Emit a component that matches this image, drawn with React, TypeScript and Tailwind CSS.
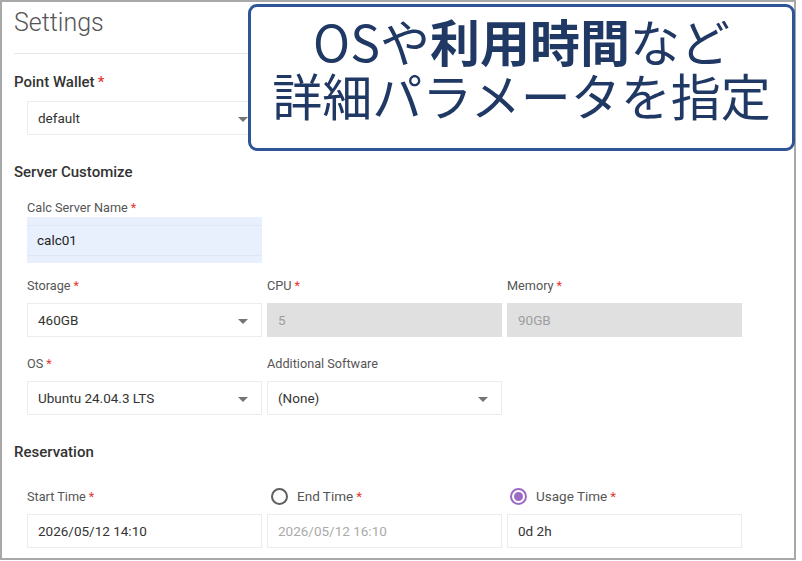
import React from "react";

const Star = () => <span className="text-[#e53935] ml-[3px]">*</span>;

const Caret = () => (
  <svg width="10" height="6" viewBox="0 0 10 6" className="absolute right-[13px] top-[15px]">
    <path d="M0 0 L10 0 L5 5 Z" fill="#757575" />
  </svg>
);

function Label({ text, req = true }: { text: string; req?: boolean }) {
  return (
    <div className="h-[16px] text-[12.7px] leading-[16px] text-[#555]">
      {text}
      {req && <Star />}
    </div>
  );
}

function Select({ value }: { value: string }) {
  return (
    <div className="relative h-[34px] w-[235px] border border-[#ececec] bg-white pl-[10px] text-[13.5px] leading-[32px] text-[#333]">
      {value}
      <Caret />
    </div>
  );
}

function Disabled({ value }: { value: string }) {
  return (
    <div className="h-[34px] w-[235px] bg-[#e0e0e0] pl-[11px] text-[13.5px] leading-[34px] text-[#9e9e9e]">
      {value}
    </div>
  );
}

function Input({ value, muted = false }: { value: string; muted?: boolean }) {
  return (
    <div
      className={
        "h-[34px] w-[235px] border border-[#ececec] bg-white pl-[10px] text-[13.5px] leading-[32px] " +
        (muted ? "text-[#aaa]" : "text-[#333]")
      }
    >
      {value}
    </div>
  );
}

function Radio({ checked }: { checked: boolean }) {
  return checked ? (
    <div className="flex h-[17px] w-[17px] items-center justify-center rounded-full border-2 border-[#9c6cc4]">
      <div className="h-[9px] w-[9px] rounded-full bg-[#9c6cc4]" />
    </div>
  ) : (
    <div className="h-[17px] w-[17px] rounded-full border-2 border-[#5f5f5f]" />
  );
}

export default function App() {
  return (
    <div
      className="relative h-[561px] w-[802px] bg-white"
      style={{ fontFamily: "Roboto, 'Noto Sans', sans-serif" }}
    >
      <div className="h-[560px] w-[796px] overflow-hidden border-2 border-[#a8a8a8] pl-[12px]">
        <div className="mt-[5px] h-[32px] text-[25px] font-light leading-[32px] text-[#555]">Settings</div>
        <div className="mt-[14px] h-px w-[770px] bg-[#e8e8e8]" />

        <div className="mt-[18px] h-[20px] text-[15px] font-medium leading-[20px] text-[#333]">
          Point Wallet
          <Star />
        </div>
        <div className="ml-[13px] mt-[9px]">
          <Select value="default" />
        </div>

        <div className="mt-[27px] h-[20px] text-[15px] font-medium leading-[20px] text-[#333]">Server Customize</div>

        <div className="ml-[13px] flex flex-col">
          <div className="mt-[18px]">
            <Label text="Calc Server Name" />
          </div>
          <div className="mt-[1px] flex h-[46px] w-[235px] flex-col justify-center bg-[#e8f0fe]">
            <div className="h-[31px] border-y border-[#dfe7f5] pl-[10px] text-[13.5px] leading-[29px] text-[#222]">calc01</div>
          </div>

          <div className="mt-[15px] grid grid-cols-[235px_235px_235px] gap-x-[5px]">
            <Label text="Storage" />
            <Label text="CPU" />
            <Label text="Memory" />
            <div className="mt-[9px]">
              <Select value="460GB" />
            </div>
            <div className="mt-[9px]">
              <Disabled value="5" />
            </div>
            <div className="mt-[9px]">
              <Disabled value="90GB" />
            </div>
          </div>

          <div className="mt-[19px] grid grid-cols-[235px_235px_235px] gap-x-[5px]">
            <Label text="OS" />
            <Label text="Additional Software" req={false} />
            <div />
            <div className="mt-[9px]">
              <Select value="Ubuntu 24.04.3 LTS" />
            </div>
            <div className="mt-[9px]">
              <Select value="(None)" />
            </div>
            <div />
          </div>
        </div>

        <div className="mt-[27px] h-[20px] text-[15px] font-medium leading-[20px] text-[#333]">Reservation</div>

        <div className="ml-[13px] mt-[27px] grid grid-cols-[235px_235px_235px] gap-x-[5px]">
          <div className="flex h-[16px] items-end">
            <Label text="Start Time" />
          </div>
          <div className="-mt-[2px] flex h-[18px] items-center gap-[9px] pl-[4px]">
            <Radio checked={false} />
            <span className="text-[13.5px] leading-[16px] text-[#555]">
              End Time
              <Star />
            </span>
          </div>
          <div className="-mt-[2px] flex h-[18px] items-center gap-[9px] pl-[3px]">
            <Radio checked={true} />
            <span className="text-[13.5px] leading-[16px] text-[#555]">
              Usage Time
              <Star />
            </span>
          </div>
          <div className="mt-[9px]">
            <Input value="2026/05/12 14:10" />
          </div>
          <div className="mt-[9px]">
            <Input value="2026/05/12 16:10" muted />
          </div>
          <div className="mt-[9px]">
            <Input value="0d 2h" />
          </div>
        </div>
      </div>

      <div
        className="absolute left-[248px] top-[4px] flex h-[147px] w-[547px] flex-col items-center justify-center rounded-[9px] border-[3px] border-[#2f5597] bg-white pb-[22px] text-[50px] leading-[54px] text-[#203864]"
        style={{ fontFamily: "'Noto Sans CJK JP', sans-serif" }}
      >
        <div className="h-[54px]">
          OSや<span className="font-bold">利用時間</span>など
        </div>
        <div className="h-[54px]">詳細パラメータを指定</div>
      </div>
    </div>
  );
}
